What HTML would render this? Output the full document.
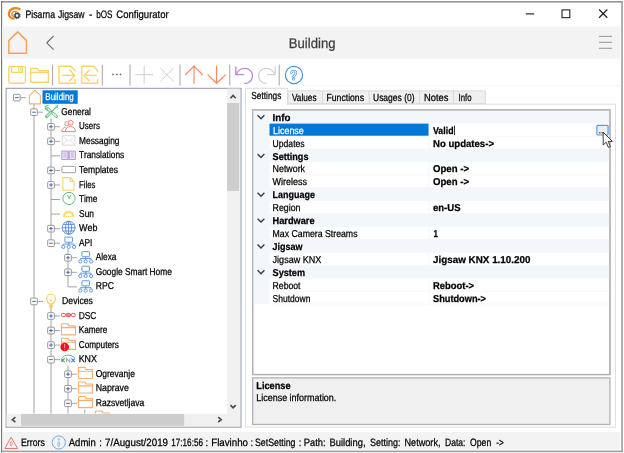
<!DOCTYPE html>
<html><head><meta charset="utf-8"><title>bOS Configurator</title>
<style>
html,body{margin:0;padding:0;background:#fff;}
body{width:624px;height:453px;position:relative;overflow:hidden;font-family:"Liberation Sans",sans-serif;}
#g{position:absolute;left:0;top:0;filter:blur(0.35px);}
.t{position:absolute;left:0;top:0;white-space:nowrap;transform-origin:0 0;}
</style></head><body>
<svg id="g" width="624" height="453" viewBox="0 0 624 453">
<rect x="0.00" y="0.00" width="624.00" height="453.00" rx="0" fill="#fff"/>
<rect x="1.10" y="1.00" width="621.80" height="1.70" rx="0" fill="#9a9a9a"/>
<rect x="621.20" y="1.00" width="1.70" height="451.20" rx="0" fill="#a2a2a2"/>
<rect x="1.10" y="450.60" width="621.80" height="1.60" rx="0" fill="#9e9e9e"/>
<rect x="1.10" y="1.00" width="1.05" height="451.20" rx="0" fill="#6a6a6a"/>
<svg x="0.00" y="0.00" width="30.00" height="26.00" viewBox="0 0 30 26" overflow="visible">
<g transform="translate(14,13.4) scale(0.9) translate(-14,-13.2)">
<path d="M20.4,8.3 C17,7.2 12.4,7.2 10,9.6 C7.6,12 7.6,15.6 10,17.6 C11,18.4 12.2,18.9 13.6,19" fill="none" stroke="#f0861c" stroke-width="2.5" stroke-linecap="round"/>
<path d="M16.8,11.2 C14.6,10.4 12,11.2 11.6,13.4 C11.4,14.8 12.2,16 13.6,16.4" fill="none" stroke="#f0861c" stroke-width="1.5" stroke-linecap="round"/>
</g>
<circle cx="17.1" cy="15.6" r="2.1" fill="#fff" stroke="#444" stroke-width="1.5"/>
<circle cx="17.1" cy="15.6" r="3.1" fill="none" stroke="#444" stroke-width="1" stroke-dasharray="1.2 1.23"/>
</svg>
<svg x="0.00" y="0.00" width="624.00" height="27.00" viewBox="0 0 624 27" overflow="visible">
<path d="M525.8,13.9H534.2" stroke="#222" stroke-width="1.15"/>
<rect x="562" y="9.9" width="7.8" height="7.8" fill="none" stroke="#222" stroke-width="1.1"/>
<path d="M599.1,9.5L607.3,17.8M607.3,9.5L599.1,17.8" stroke="#222" stroke-width="1.25"/>
</svg>
<rect x="2.15" y="26.40" width="618.20" height="32.10" rx="0" fill="#f3f3f3"/>
<svg x="0.00" y="26.00" width="624.00" height="33.00" viewBox="0 26 624 33" overflow="visible">
<path d="M8.8,53.3V40.6L17.7,31.9L26.5,40.6V53.3Z" fill="none" stroke="#f4a45a" stroke-width="1.5" stroke-linejoin="round"/>
<path d="M53.6,35.9L46.8,42.8L53.6,49.6" fill="none" stroke="#6e6e6e" stroke-width="1.2"/>
<path d="M599,36.4H612M599,42.3H612M599,48.3H612" stroke="#8c8c8c" stroke-width="0.9"/>
</svg>
<svg x="0.00" y="58.00" width="624.00" height="30.00" viewBox="0 58 624 30" overflow="visible">
<g fill="none" stroke="#f8d36e" stroke-width="1.35">
<rect x="8.8" y="66.6" width="16.6" height="16.6" rx="1.6"/>
<path d="M11.6,66.6V72.4H22.4V66.6"/>
<rect x="18.6" y="67.8" width="2.2" height="3.2" stroke-width="0.9"/>
<path d="M30.8,82.2V68.5H37.6L38.8,70.7H48.4V82.2Z" stroke-linejoin="round"/>
<path d="M30.8,72.5H48.4"/>
<path d="M75,71.8V70.6L70.8,66.2H59V83.2H75V78.8"/>
<path d="M61.4,75.4H74.4M69.4,69.8L74.6,75.4L69.4,81.2"/>
<path d="M97.6,71.8V70.6L93.4,66.2H81.8V83.2H97.6V78.8"/>
<path d="M96.8,75.4H84.4M89.6,69.8L84.2,75.4L89.6,81.2"/>
</g>
<g stroke="#a6a6a6" stroke-width="1">
<path d="M52.6,64.5V85.6M102.3,64.5V85.6M130,64.5V85.6M180,64.5V85.6M229.8,64.5V85.6M279.2,64.5V85.6"/>
</g>
<g fill="#666"><circle cx="113" cy="74.4" r="0.85"/><circle cx="116.8" cy="74.4" r="0.85"/><circle cx="120.5" cy="74.4" r="0.85"/></g>
<g stroke="#cfcfcf" stroke-width="1" fill="none">
<path d="M135.4,74.7H153M144.2,65.8V83.6"/>
<path d="M160.4,68L173.6,81.4M173.6,68L160.4,81.4"/>
</g>
<g stroke="#f58c60" stroke-width="1.2" fill="none">
<path d="M194,66.2V83.7M185.2,75L194,66.2L202.8,75"/>
<path d="M216.6,65.8V83.3M207.6,74.6L216.6,83.3L225.8,74.6"/>
</g>
<g stroke="#b68bd9" stroke-width="1.3" fill="none">
<path d="M235.8,66.4V74.6H244"/>
<path d="M236.2,74.2C238,70.2 242,67.8 246,68.4 C250.4,69.2 253,72.8 252.4,76.8 C251.8,80.8 248.4,83.6 244.2,83.3"/>
</g>
<g stroke="#d2d2d2" stroke-width="1.3" fill="none">
<path d="M275.2,66.4V74.6H267"/>
<path d="M274.8,74.2C273,70.2 269,67.8 265,68.4 C260.6,69.2 258,72.8 258.6,76.8 C259.2,80.8 262.6,83.6 266.8,83.3"/>
</g>
<circle cx="294" cy="75" r="8.6" fill="none" stroke="#4a90d9" stroke-width="1.2"/>
</svg>
<rect x="6.10" y="88.30" width="234.90" height="338.90" rx="0" fill="#fff" stroke="#9298a4" stroke-width="1.0"/>
<rect x="227.10" y="88.60" width="12.80" height="325.30" rx="0" fill="#f0f0f0"/>
<rect x="227.10" y="103.00" width="12.00" height="87.90" rx="0" fill="#cdcdcd"/>
<rect x="227.10" y="413.90" width="12.80" height="11.90" rx="0" fill="#f0f0f0"/>
<rect x="6.60" y="413.90" width="220.50" height="11.90" rx="0" fill="#f0f0f0"/>
<rect x="21.05" y="413.90" width="163.10" height="11.90" rx="0" fill="#cdcdcd"/>
<svg x="0.00" y="88.00" width="624.00" height="340.00" viewBox="0 88 624 340" overflow="visible">
<g fill="none" stroke="#484848" stroke-width="1.6">
<path d="M230.5,98.2L233.1,95.4L235.7,98.2"/>
<path d="M230.5,405.1L233.1,407.9L235.7,405.1"/>
<path d="M15.4,417.2L12.4,419.7L15.4,422.2"/>
<path d="M218.2,417.2L221.2,419.7L218.2,422.2"/>
</g>
</svg>
<svg x="6.50" y="88.50" width="221.00" height="325.10" viewBox="6.5 88.5 221 325.1" overflow="hidden"><path d="M34,103.65V420.41" stroke="#9a9a9a" stroke-width="0.9"/><path d="M51,118.21V243.20" stroke="#9a9a9a" stroke-width="0.9"/><path d="M68,249.20V286.87" stroke="#9a9a9a" stroke-width="0.9"/><path d="M51,307.42V420.41" stroke="#9a9a9a" stroke-width="0.9"/><path d="M68,365.64V420.41" stroke="#9a9a9a" stroke-width="0.9"/><path d="M84.8,409.50V419.86" stroke="#9a9a9a" stroke-width="0.9"/><path d="M16.8,97.65H25.8" stroke="#9a9a9a" stroke-width="0.9"/><rect x="13.50" y="94.35" width="6.6" height="6.6" rx="0.8" fill="#fff" stroke="#8c8c8c" stroke-width="0.9"/><path d="M15.00,97.65H18.60" stroke="#3a50a8" stroke-width="0.9"/><path d="M34,112.21H43" stroke="#9a9a9a" stroke-width="0.9"/><rect x="30.70" y="108.91" width="6.6" height="6.6" rx="0.8" fill="#fff" stroke="#8c8c8c" stroke-width="0.9"/><path d="M32.20,112.21H35.80" stroke="#3a50a8" stroke-width="0.9"/><path d="M51,126.76H60" stroke="#9a9a9a" stroke-width="0.9"/><rect x="47.70" y="123.46" width="6.6" height="6.6" rx="0.8" fill="#fff" stroke="#8c8c8c" stroke-width="0.9"/><path d="M49.20,126.76H52.80" stroke="#3a50a8" stroke-width="0.9"/><path d="M51.00,124.96V128.56" stroke="#3a50a8" stroke-width="0.9"/><path d="M51,141.31H60" stroke="#9a9a9a" stroke-width="0.9"/><rect x="47.70" y="138.01" width="6.6" height="6.6" rx="0.8" fill="#fff" stroke="#8c8c8c" stroke-width="0.9"/><path d="M49.20,141.31H52.80" stroke="#3a50a8" stroke-width="0.9"/><path d="M51.00,139.51V143.12" stroke="#3a50a8" stroke-width="0.9"/><path d="M51,155.87H60" stroke="#9a9a9a" stroke-width="0.9"/><path d="M51,170.43H60" stroke="#9a9a9a" stroke-width="0.9"/><rect x="47.70" y="167.12" width="6.6" height="6.6" rx="0.8" fill="#fff" stroke="#8c8c8c" stroke-width="0.9"/><path d="M49.20,170.43H52.80" stroke="#3a50a8" stroke-width="0.9"/><path d="M51.00,168.62V172.23" stroke="#3a50a8" stroke-width="0.9"/><path d="M51,184.98H60" stroke="#9a9a9a" stroke-width="0.9"/><rect x="47.70" y="181.68" width="6.6" height="6.6" rx="0.8" fill="#fff" stroke="#8c8c8c" stroke-width="0.9"/><path d="M49.20,184.98H52.80" stroke="#3a50a8" stroke-width="0.9"/><path d="M51.00,183.18V186.78" stroke="#3a50a8" stroke-width="0.9"/><path d="M51,199.53H60" stroke="#9a9a9a" stroke-width="0.9"/><path d="M51,214.09H60" stroke="#9a9a9a" stroke-width="0.9"/><path d="M51,228.65H60" stroke="#9a9a9a" stroke-width="0.9"/><rect x="47.70" y="225.34" width="6.6" height="6.6" rx="0.8" fill="#fff" stroke="#8c8c8c" stroke-width="0.9"/><path d="M49.20,228.65H52.80" stroke="#3a50a8" stroke-width="0.9"/><path d="M51.00,226.84V230.45" stroke="#3a50a8" stroke-width="0.9"/><path d="M51,243.20H60" stroke="#9a9a9a" stroke-width="0.9"/><rect x="47.70" y="239.90" width="6.6" height="6.6" rx="0.8" fill="#fff" stroke="#8c8c8c" stroke-width="0.9"/><path d="M49.20,243.20H52.80" stroke="#3a50a8" stroke-width="0.9"/><path d="M68,257.75H77" stroke="#9a9a9a" stroke-width="0.9"/><rect x="64.70" y="254.45" width="6.6" height="6.6" rx="0.8" fill="#fff" stroke="#8c8c8c" stroke-width="0.9"/><path d="M66.20,257.75H69.80" stroke="#3a50a8" stroke-width="0.9"/><path d="M68.00,255.95V259.56" stroke="#3a50a8" stroke-width="0.9"/><path d="M68,272.31H77" stroke="#9a9a9a" stroke-width="0.9"/><rect x="64.70" y="269.01" width="6.6" height="6.6" rx="0.8" fill="#fff" stroke="#8c8c8c" stroke-width="0.9"/><path d="M66.20,272.31H69.80" stroke="#3a50a8" stroke-width="0.9"/><path d="M68.00,270.51V274.11" stroke="#3a50a8" stroke-width="0.9"/><path d="M68,286.87H77" stroke="#9a9a9a" stroke-width="0.9"/><path d="M34,301.42H43" stroke="#9a9a9a" stroke-width="0.9"/><rect x="30.70" y="298.12" width="6.6" height="6.6" rx="0.8" fill="#fff" stroke="#8c8c8c" stroke-width="0.9"/><path d="M32.20,301.42H35.80" stroke="#3a50a8" stroke-width="0.9"/><path d="M51,315.98H60" stroke="#9a9a9a" stroke-width="0.9"/><rect x="47.70" y="312.68" width="6.6" height="6.6" rx="0.8" fill="#fff" stroke="#8c8c8c" stroke-width="0.9"/><path d="M49.20,315.98H52.80" stroke="#3a50a8" stroke-width="0.9"/><path d="M51.00,314.18V317.78" stroke="#3a50a8" stroke-width="0.9"/><path d="M51,330.53H60" stroke="#9a9a9a" stroke-width="0.9"/><rect x="47.70" y="327.23" width="6.6" height="6.6" rx="0.8" fill="#fff" stroke="#8c8c8c" stroke-width="0.9"/><path d="M49.20,330.53H52.80" stroke="#3a50a8" stroke-width="0.9"/><path d="M51.00,328.73V332.33" stroke="#3a50a8" stroke-width="0.9"/><path d="M51,345.09H60" stroke="#9a9a9a" stroke-width="0.9"/><rect x="47.70" y="341.79" width="6.6" height="6.6" rx="0.8" fill="#fff" stroke="#8c8c8c" stroke-width="0.9"/><path d="M49.20,345.09H52.80" stroke="#3a50a8" stroke-width="0.9"/><path d="M51.00,343.29V346.89" stroke="#3a50a8" stroke-width="0.9"/><path d="M51,359.64H60" stroke="#9a9a9a" stroke-width="0.9"/><rect x="47.70" y="356.34" width="6.6" height="6.6" rx="0.8" fill="#fff" stroke="#8c8c8c" stroke-width="0.9"/><path d="M49.20,359.64H52.80" stroke="#3a50a8" stroke-width="0.9"/><path d="M68,374.20H77" stroke="#9a9a9a" stroke-width="0.9"/><rect x="64.70" y="370.90" width="6.6" height="6.6" rx="0.8" fill="#fff" stroke="#8c8c8c" stroke-width="0.9"/><path d="M66.20,374.20H69.80" stroke="#3a50a8" stroke-width="0.9"/><path d="M68.00,372.40V376.00" stroke="#3a50a8" stroke-width="0.9"/><path d="M68,388.75H77" stroke="#9a9a9a" stroke-width="0.9"/><rect x="64.70" y="385.45" width="6.6" height="6.6" rx="0.8" fill="#fff" stroke="#8c8c8c" stroke-width="0.9"/><path d="M66.20,388.75H69.80" stroke="#3a50a8" stroke-width="0.9"/><path d="M68.00,386.95V390.55" stroke="#3a50a8" stroke-width="0.9"/><path d="M68,403.30H77" stroke="#9a9a9a" stroke-width="0.9"/><rect x="64.70" y="400.00" width="6.6" height="6.6" rx="0.8" fill="#fff" stroke="#8c8c8c" stroke-width="0.9"/><path d="M66.20,403.30H69.80" stroke="#3a50a8" stroke-width="0.9"/><g transform="translate(25.80,97.65)" fill="none" stroke-width="1"><path d="M3.6,6.2V-2.2L9.1,-7.4L14.6,-2.2V6.2Z" stroke="#f6b26b" stroke-width="1.1"/></g><g transform="translate(43.00,112.21)" fill="none" stroke-width="1"><path d="M4.6,-3.6L13.4,4.2" stroke="#63c389" stroke-width="3" stroke-linecap="round"/><path d="M4.8,-3.4L13.2,4" stroke="#fff" stroke-width="1.2" stroke-linecap="round"/><path d="M5.4,-6.6C3.6,-7.2 1.8,-5.8 2.2,-3.8C2.6,-2.4 4,-1.8 5.2,-2.2" stroke="#63c389" stroke-width="1.1"/><path d="M14.6,-6.4L9,-0.8" stroke="#63c389" stroke-width="1.3" stroke-linecap="round"/><path d="M12.6,-6.8L15.2,-4.4" stroke="#63c389" stroke-width="1"/><path d="M8.2,0L3.6,4.4" stroke="#63c389" stroke-width="3.2" stroke-linecap="round"/><path d="M7.8,0.4L4,4" stroke="#d8f0e0" stroke-width="1.2" stroke-linecap="round"/></g><g transform="translate(60.00,126.76)" fill="none" stroke-width="1"><g stroke="#ee8a7c" stroke-width="1"><circle cx="6.9" cy="-3" r="2.1"/><path d="M1.6,4.6C1.6,2.4 3.4,0.8 5.6,0.4"/><circle cx="10.7" cy="-4" r="2.4" fill="#fff"/><path d="M5.4,4.8C5.4,1.4 7.6,-0.2 10.6,-0.2C13.6,-0.2 15.4,1.4 15.4,4.8Z" fill="#fff"/><path d="M1.6,4.8H5.4"/></g></g><g transform="translate(60.00,141.31)" fill="none" stroke-width="1"><g stroke="#dadada"><rect x="2.3" y="-5.6" width="12.7" height="9.4"/><path d="M2.3,-5.6L8.6,0.4L15,-5.6M2.3,3.8L6.8,-1.2M15,3.8L10.4,-1.2" stroke-width="0.8"/></g></g><g transform="translate(60.00,155.87)" fill="none" stroke-width="1"><g stroke="#b39ad8"><path d="M1.8,-4.8V3.6H8V-4.8ZM9.2,-4.8V3.6H15.4V-4.8Z" fill="#efe8f8"/><path d="M3.2,-2.8H6.6M3.2,-0.8H6.6M3.2,1.2H6.6M10.6,-2.8H14M10.6,-0.8H14M10.6,1.2H14" stroke-width="0.8"/><path d="M8.6,-5V4" stroke-width="0.8"/></g></g><g transform="translate(60.00,170.43)" fill="none" stroke-width="1"><rect x="1.9" y="-4.1" width="13.6" height="6.4" rx="0.8" stroke="#a2a2a2"/></g><g transform="translate(60.00,184.98)" fill="none" stroke-width="1"><path d="M2.8,-7.4H10.2L14,-3.6V5.2H2.8Z M10.2,-7.4V-3.6H14" stroke="#f9d070" stroke-width="1.1"/></g><g transform="translate(60.00,199.53)" fill="none" stroke-width="1"><circle cx="9" cy="-1.1" r="6.1" stroke="#62bb7a"/><path d="M7.4,-4.4L9,-0.8L10.6,-4.4" stroke="#62bb7a" stroke-width="0.9"/></g><g transform="translate(60.00,214.09)" fill="none" stroke-width="1"><path d="M4.2,2.2A4.4,4.4 0 0 1 13,2.2" stroke="#fbd974" stroke-width="2.3"/><path d="M2.8,2.3H14.4" stroke="#fbd974" stroke-width="1"/></g><g transform="translate(60.00,228.65)" fill="none" stroke-width="1"><g stroke="#4a8cdb" stroke-width="0.9"><circle cx="8.6" cy="-0.9" r="6.5"/><ellipse cx="8.6" cy="-0.9" rx="3" ry="6.5"/><path d="M8.6,-7.4V5.6M2.1,-0.9H15.1M3,-4.2H14.2M3,2.4H14.2"/></g></g><g transform="translate(60.00,243.20)" fill="none" stroke-width="1"><g stroke="#6398df" stroke-width="1"><rect x="4.9" y="-6.1" width="7.6" height="5.1" rx="0.6"/><path d="M3.3,0.8H14.1M8.7,-1V2"/><circle cx="3.3" cy="3.7" r="1.6"/><circle cx="8.7" cy="3.7" r="1.6"/><circle cx="14.1" cy="3.7" r="1.6"/><path d="M3.3,0.8V2.1M14.1,0.8V2.1" stroke-width="0.8"/></g></g><g transform="translate(77.00,257.75)" fill="none" stroke-width="1"><g stroke="#6398df" stroke-width="1"><rect x="4.9" y="-6.1" width="7.6" height="5.1" rx="0.6"/><path d="M3.3,0.8H14.1M8.7,-1V2"/><circle cx="3.3" cy="3.7" r="1.6"/><circle cx="8.7" cy="3.7" r="1.6"/><circle cx="14.1" cy="3.7" r="1.6"/><path d="M3.3,0.8V2.1M14.1,0.8V2.1" stroke-width="0.8"/></g></g><g transform="translate(77.00,272.31)" fill="none" stroke-width="1"><g stroke="#6398df" stroke-width="1"><rect x="4.9" y="-6.1" width="7.6" height="5.1" rx="0.6"/><path d="M3.3,0.8H14.1M8.7,-1V2"/><circle cx="3.3" cy="3.7" r="1.6"/><circle cx="8.7" cy="3.7" r="1.6"/><circle cx="14.1" cy="3.7" r="1.6"/><path d="M3.3,0.8V2.1M14.1,0.8V2.1" stroke-width="0.8"/></g></g><g transform="translate(77.00,286.87)" fill="none" stroke-width="1"><g stroke="#6398df" stroke-width="1"><rect x="4.9" y="-6.1" width="7.6" height="5.1" rx="0.6"/><path d="M3.3,0.8H14.1M8.7,-1V2"/><circle cx="3.3" cy="3.7" r="1.6"/><circle cx="8.7" cy="3.7" r="1.6"/><circle cx="14.1" cy="3.7" r="1.6"/><path d="M3.3,0.8V2.1M14.1,0.8V2.1" stroke-width="0.8"/></g></g><g transform="translate(43.00,301.42)" fill="none" stroke-width="1"><g stroke="#f9cf4f" stroke-width="1.1"><path d="M6.2,2.4C4.2,0.6 3.6,-1 3.6,-2.6C3.6,-5.2 5.6,-7.2 8,-7.2C10.4,-7.2 12.4,-5.2 12.4,-2.6C12.4,-1 11.8,0.6 9.8,2.4Z"/><path d="M7,-2.4L8,0L9,-2.4" stroke-width="0.8"/></g><rect x="6.3" y="2.8" width="3.4" height="3.8" rx="0.8" fill="#f9cf4f" stroke="none"/></g><g transform="translate(60.00,315.98)" fill="none" stroke-width="1"><g stroke="#e8525c" stroke-width="1"><rect x="1.5" y="-2.6" width="3.9" height="3.3" rx="1.2"/><rect x="6.2" y="-2.6" width="4.4" height="3.3" rx="1.4" fill="#f08a90"/><rect x="11.4" y="-2.6" width="3.9" height="3.3" rx="1.4"/></g></g><g transform="translate(60.00,330.53)" fill="none" stroke-width="1"><g stroke="#f7ae72" stroke-width="1.1"><path d="M1.5,4.3V-6Q1.5,-6.8 2.3,-6.8H7.4Q8.2,-6.8 8.5,-6L8.9,-4.7H15.5V4.3Z" stroke-linejoin="round"/><path d="M1.5,-2.9H15.5"/></g></g><g transform="translate(60.00,345.09)" fill="none" stroke-width="1"><g stroke="#f7ae72" stroke-width="1.1"><path d="M1.5,4.3V-6Q1.5,-6.8 2.3,-6.8H7.4Q8.2,-6.8 8.5,-6L8.9,-4.7H15.5V4.3Z" stroke-linejoin="round"/><path d="M1.5,-2.9H15.5"/></g><circle cx="4.7" cy="1.9" r="4.3" fill="#f5101c" stroke="none"/><path d="M4.7,-1.2V3.2M4.7,4.2V5" stroke="#ff9a9a" stroke-width="1"/></g><g transform="translate(60.00,359.64)" fill="none" stroke-width="1"><path d="M1.6,-1.4C3.2,-3.4 5.6,-4.5 8.2,-4.5" stroke="#5cb274" stroke-width="0.9"/><path d="M8.2,-4.5C10.8,-4.5 13.4,-3.4 15,-1.4" stroke="#4a92d2" stroke-width="0.9"/><g stroke-width="1.1"><path d="M1.8,-1.2V2.4M4.8,-1.2L2.2,0.6L4.8,2.4" stroke="#48a868"/><path d="M6.5,2.4V-1.2L9.7,2.4V-1.2" stroke="#a4acb4"/><path d="M11.4,-1.2L15,2.4M15,-1.2L11.4,2.4" stroke="#3f82cc"/></g></g><g transform="translate(77.00,374.20)" fill="none" stroke-width="1"><g stroke="#f7ae72" stroke-width="1.1"><path d="M1.5,4.3V-6Q1.5,-6.8 2.3,-6.8H7.4Q8.2,-6.8 8.5,-6L8.9,-4.7H15.5V4.3Z" stroke-linejoin="round"/><path d="M1.5,-2.9H15.5"/></g></g><g transform="translate(77.00,388.75)" fill="none" stroke-width="1"><g stroke="#f7ae72" stroke-width="1.1"><path d="M1.5,4.3V-6Q1.5,-6.8 2.3,-6.8H7.4Q8.2,-6.8 8.5,-6L8.9,-4.7H15.5V4.3Z" stroke-linejoin="round"/><path d="M1.5,-2.9H15.5"/></g></g><g transform="translate(77.00,403.30)" fill="none" stroke-width="1"><g stroke="#f7ae72" stroke-width="1.1"><path d="M1.5,4.3V-6Q1.5,-6.8 2.3,-6.8H7.4Q8.2,-6.8 8.5,-6L8.9,-4.7H15.5V4.3Z" stroke-linejoin="round"/><path d="M1.5,-2.9H15.5"/></g></g><g transform="translate(94.00,417.86)" fill="none" stroke-width="1"><g stroke="#f7ae72" stroke-width="1.1"><path d="M1.5,4.3V-6Q1.5,-6.8 2.3,-6.8H7.4Q8.2,-6.8 8.5,-6L8.9,-4.7H15.5V4.3Z" stroke-linejoin="round"/><path d="M1.5,-2.9H15.5"/></g></g></svg>
<rect x="42.50" y="90.30" width="35.20" height="13.50" rx="0" fill="#0078d7"/>
<rect x="303.00" y="85.20" width="318.00" height="1.00" rx="0" fill="#f3f6fb"/>
<rect x="245.30" y="104.20" width="370.20" height="323.00" rx="0" fill="#fff" stroke="#e0e0e0" stroke-width="1.0"/>
<rect x="288.10" y="90.90" width="34.40" height="12.80" rx="0" fill="#f0f0f0" stroke="#d9d9d9" stroke-width="1.0"/>
<rect x="322.50" y="90.90" width="46.80" height="12.80" rx="0" fill="#f0f0f0" stroke="#d9d9d9" stroke-width="1.0"/>
<rect x="369.30" y="90.90" width="50.20" height="12.80" rx="0" fill="#f0f0f0" stroke="#d9d9d9" stroke-width="1.0"/>
<rect x="419.50" y="90.90" width="34.00" height="12.80" rx="0" fill="#f0f0f0" stroke="#d9d9d9" stroke-width="1.0"/>
<rect x="453.50" y="90.90" width="31.80" height="12.80" rx="0" fill="#f0f0f0" stroke="#d9d9d9" stroke-width="1.0"/>
<rect x="244.80" y="87.75" width="43.30" height="17.20" fill="#fff"/>
<path d="M245.30,104.95V88.25H287.60V104.95" fill="none" stroke="#d9d9d9" stroke-width="1.0"/>
<rect x="252.65" y="109.95" width="357.30" height="264.60" rx="0" fill="#fff" stroke="#b2b2b2" stroke-width="1.3"/>
<rect x="253.00" y="110.30" width="16.50" height="193.92" rx="0" fill="#f3f6fb"/>
<rect x="269.50" y="110.49" width="340.10" height="12.91" rx="0" fill="#f3f6fb"/>
<rect x="269.50" y="135.72" width="340.10" height="0.80" rx="0" fill="#f3f6fb"/>
<rect x="269.50" y="123.61" width="159.50" height="12.11" rx="0" fill="#0078d7"/>
<rect x="269.50" y="148.64" width="340.10" height="0.80" rx="0" fill="#f3f6fb"/>
<rect x="269.50" y="149.24" width="340.10" height="12.91" rx="0" fill="#f3f6fb"/>
<rect x="269.50" y="174.47" width="340.10" height="0.80" rx="0" fill="#f3f6fb"/>
<rect x="269.50" y="187.38" width="340.10" height="0.80" rx="0" fill="#f3f6fb"/>
<rect x="269.50" y="187.98" width="340.10" height="12.91" rx="0" fill="#f3f6fb"/>
<rect x="269.50" y="213.21" width="340.10" height="0.80" rx="0" fill="#f3f6fb"/>
<rect x="269.50" y="213.81" width="340.10" height="12.91" rx="0" fill="#f3f6fb"/>
<rect x="269.50" y="239.04" width="340.10" height="0.80" rx="0" fill="#f3f6fb"/>
<rect x="269.50" y="239.64" width="340.10" height="12.91" rx="0" fill="#f3f6fb"/>
<rect x="269.50" y="264.87" width="340.10" height="0.80" rx="0" fill="#f3f6fb"/>
<rect x="269.50" y="265.47" width="340.10" height="12.91" rx="0" fill="#f3f6fb"/>
<rect x="269.50" y="290.70" width="340.10" height="0.80" rx="0" fill="#f3f6fb"/>
<rect x="269.50" y="303.62" width="340.10" height="0.80" rx="0" fill="#f3f6fb"/>
<rect x="428.50" y="123.41" width="0.90" height="25.83" rx="0" fill="#f3f6fb"/>
<rect x="428.50" y="162.15" width="0.90" height="25.83" rx="0" fill="#f3f6fb"/>
<rect x="428.50" y="200.90" width="0.90" height="12.91" rx="0" fill="#f3f6fb"/>
<rect x="428.50" y="226.73" width="0.90" height="12.91" rx="0" fill="#f3f6fb"/>
<rect x="428.50" y="252.56" width="0.90" height="12.91" rx="0" fill="#f3f6fb"/>
<rect x="428.50" y="278.39" width="0.90" height="25.83" rx="0" fill="#f3f6fb"/>
<svg x="0.00" y="105.00" width="624.00" height="270.00" viewBox="0 105 624 270" overflow="visible"><path d="M257.6,115.35L261,118.75L264.4,115.35" fill="none" stroke="#3a3a3a" stroke-width="1.4"/><path d="M257.6,154.09L261,157.50L264.4,154.09" fill="none" stroke="#3a3a3a" stroke-width="1.4"/><path d="M257.6,192.84L261,196.24L264.4,192.84" fill="none" stroke="#3a3a3a" stroke-width="1.4"/><path d="M257.6,218.67L261,222.07L264.4,218.67" fill="none" stroke="#3a3a3a" stroke-width="1.4"/><path d="M257.6,244.50L261,247.90L264.4,244.50" fill="none" stroke="#3a3a3a" stroke-width="1.4"/><path d="M257.6,270.33L261,273.73L264.4,270.33" fill="none" stroke="#3a3a3a" stroke-width="1.4"/></svg>
<rect x="252.65" y="109.95" width="357.30" height="264.60" rx="0" fill="none" stroke="#b2b2b2" stroke-width="1.3"/>
<rect x="454.00" y="125.57" width="0.80" height="9.40" rx="0" fill="#000"/>
<rect x="596.90" y="125.30" width="11.20" height="9.70" rx="1" fill="#eeeeee" stroke="#4a9fea" stroke-width="1.2"/>
<rect x="599.00" y="132.20" width="0.90" height="1.20" rx="0" fill="#333"/>
<rect x="600.60" y="132.20" width="0.90" height="1.20" rx="0" fill="#333"/>
<rect x="602.20" y="132.20" width="0.90" height="1.20" rx="0" fill="#333"/>
<svg x="602.60" y="131.60" width="11.00" height="17.00" viewBox="0 0 11 17" overflow="visible"><path d="M0.6,0.6V13.4L3.6,10.6L5.8,15.8L7.8,15L5.6,9.8H9.8Z" fill="#fff" stroke="#2a2a2a" stroke-width="0.9" stroke-linejoin="round"/></svg>
<rect x="252.65" y="377.85" width="357.30" height="46.60" rx="0" fill="#f0f0f0" stroke="#b2b2b2" stroke-width="1.3"/>
<rect x="3.00" y="432.00" width="616.90" height="17.70" rx="0" fill="#f3f3f3"/>
<svg x="0.00" y="430.00" width="70.00" height="22.00" viewBox="0 430 70 22" overflow="visible">
<path d="M11.1,437.2L4.8,448.5H17.6Z" fill="none" stroke="#e8786c" stroke-width="1" stroke-linejoin="round"/>
<ellipse cx="11.2" cy="443.8" rx="0.9" ry="2.3" fill="none" stroke="#e8786c" stroke-width="0.7"/>
<circle cx="58.8" cy="442.5" r="6.6" fill="none" stroke="#6ea8e2" stroke-width="1"/>
<circle cx="58.8" cy="439.4" r="0.8" fill="none" stroke="#6ea8e2" stroke-width="0.7"/>
<ellipse cx="58.8" cy="444.2" rx="0.9" ry="2.6" fill="none" stroke="#6ea8e2" stroke-width="0.7"/>
</svg>
<g font-family="Liberation Sans, sans-serif" text-rendering="geometricPrecision" xml:space="preserve">
<text x="25.50" y="17.94" font-size="10.8" fill="#000" textLength="29.50" lengthAdjust="spacingAndGlyphs"  stroke="#000" stroke-width="0.25">Pisarna</text>
<text x="58.00" y="17.94" font-size="10.8" fill="#000" textLength="26.50" lengthAdjust="spacingAndGlyphs"  stroke="#000" stroke-width="0.25">Jigsaw</text>
<text x="89.00" y="17.94" font-size="10.8" fill="#000" textLength="3.40" lengthAdjust="spacingAndGlyphs"  stroke="#000" stroke-width="0.25">-</text>
<text x="96.25" y="17.94" font-size="10.8" fill="#000" textLength="16.25" lengthAdjust="spacingAndGlyphs"  stroke="#000" stroke-width="0.25">bOS</text>
<text x="116.25" y="17.94" font-size="10.8" fill="#000" textLength="52.50" lengthAdjust="spacingAndGlyphs"  stroke="#000" stroke-width="0.25">Configurator</text>
<text x="288.80" y="48.05" font-size="14" fill="#3c3c3c" textLength="46.70" lengthAdjust="spacingAndGlyphs"  stroke="#3c3c3c" stroke-width="0.25">Building</text>
<text x="289.80" y="80.25" font-size="14" font-weight="bold" fill="#fff" textLength="7.80" lengthAdjust="spacingAndGlyphs" stroke="#4a90d9" stroke-width="0.7">?</text>
<text x="45.30" y="100.22" font-size="10" fill="#fff" textLength="28.50" lengthAdjust="spacingAndGlyphs"  stroke="#fff" stroke-width="0.25">Building</text>
<text x="61.30" y="114.77" font-size="10" fill="#000" textLength="29.60" lengthAdjust="spacingAndGlyphs"  stroke="#000" stroke-width="0.25">General</text>
<text x="79.10" y="129.32" font-size="10" fill="#000" textLength="20.80" lengthAdjust="spacingAndGlyphs"  stroke="#000" stroke-width="0.25">Users</text>
<text x="79.10" y="143.88" font-size="10" fill="#000" textLength="40.30" lengthAdjust="spacingAndGlyphs"  stroke="#000" stroke-width="0.25">Messaging</text>
<text x="79.10" y="158.44" font-size="10" fill="#000" textLength="45.10" lengthAdjust="spacingAndGlyphs"  stroke="#000" stroke-width="0.25">Translations</text>
<text x="79.10" y="172.99" font-size="10" fill="#000" textLength="38.80" lengthAdjust="spacingAndGlyphs"  stroke="#000" stroke-width="0.25">Templates</text>
<text x="79.10" y="187.55" font-size="10" fill="#000" textLength="16.30" lengthAdjust="spacingAndGlyphs"  stroke="#000" stroke-width="0.25">Files</text>
<text x="79.10" y="202.10" font-size="10" fill="#000" textLength="18.30" lengthAdjust="spacingAndGlyphs"  stroke="#000" stroke-width="0.25">Time</text>
<text x="79.10" y="216.66" font-size="10" fill="#000" textLength="14.80" lengthAdjust="spacingAndGlyphs"  stroke="#000" stroke-width="0.25">Sun</text>
<text x="79.10" y="231.21" font-size="10" fill="#000" textLength="18.30" lengthAdjust="spacingAndGlyphs"  stroke="#000" stroke-width="0.25">Web</text>
<text x="79.10" y="245.77" font-size="10" fill="#000" textLength="13.30" lengthAdjust="spacingAndGlyphs"  stroke="#000" stroke-width="0.25">API</text>
<text x="95.70" y="260.32" font-size="10" fill="#000" textLength="20.70" lengthAdjust="spacingAndGlyphs"  stroke="#000" stroke-width="0.25">Alexa</text>
<text x="95.70" y="274.88" font-size="10" fill="#000" textLength="76.20" lengthAdjust="spacingAndGlyphs"  stroke="#000" stroke-width="0.25">Google Smart Home</text>
<text x="95.70" y="289.43" font-size="10" fill="#000" textLength="18.20" lengthAdjust="spacingAndGlyphs"  stroke="#000" stroke-width="0.25">RPC</text>
<text x="62.10" y="303.98" font-size="10" fill="#000" textLength="30.80" lengthAdjust="spacingAndGlyphs"  stroke="#000" stroke-width="0.25">Devices</text>
<text x="78.70" y="318.54" font-size="10" fill="#000" textLength="17.70" lengthAdjust="spacingAndGlyphs"  stroke="#000" stroke-width="0.25">DSC</text>
<text x="78.70" y="333.09" font-size="10" fill="#000" textLength="28.70" lengthAdjust="spacingAndGlyphs"  stroke="#000" stroke-width="0.25">Kamere</text>
<text x="78.70" y="347.65" font-size="10" fill="#000" textLength="40.20" lengthAdjust="spacingAndGlyphs"  stroke="#000" stroke-width="0.25">Computers</text>
<text x="78.70" y="362.20" font-size="10" fill="#000" textLength="18.20" lengthAdjust="spacingAndGlyphs"  stroke="#000" stroke-width="0.25">KNX</text>
<text x="95.70" y="376.76" font-size="10" fill="#000" textLength="39.20" lengthAdjust="spacingAndGlyphs"  stroke="#000" stroke-width="0.25">Ogrevanje</text>
<text x="95.70" y="391.31" font-size="10" fill="#000" textLength="33.20" lengthAdjust="spacingAndGlyphs"  stroke="#000" stroke-width="0.25">Naprave</text>
<text x="95.70" y="405.87" font-size="10" fill="#000" textLength="48.70" lengthAdjust="spacingAndGlyphs"  stroke="#000" stroke-width="0.25">Razsvetljava</text>
<text x="292.00" y="100.93" font-size="10.2" fill="#000" textLength="24.50" lengthAdjust="spacingAndGlyphs"  stroke="#000" stroke-width="0.25">Values</text>
<text x="326.50" y="100.93" font-size="10.2" fill="#000" textLength="37.50" lengthAdjust="spacingAndGlyphs"  stroke="#000" stroke-width="0.25">Functions</text>
<text x="373.00" y="100.93" font-size="10.2" fill="#000" textLength="41.50" lengthAdjust="spacingAndGlyphs"  stroke="#000" stroke-width="0.25">Usages (0)</text>
<text x="424.00" y="100.93" font-size="10.2" fill="#000" textLength="24.50" lengthAdjust="spacingAndGlyphs"  stroke="#000" stroke-width="0.25">Notes</text>
<text x="458.50" y="100.93" font-size="10.2" fill="#000" textLength="13.00" lengthAdjust="spacingAndGlyphs"  stroke="#000" stroke-width="0.25">Info</text>
<text x="251.30" y="99.43" font-size="10.2" fill="#000" textLength="30.00" lengthAdjust="spacingAndGlyphs"  stroke="#000" stroke-width="0.25">Settings</text>
<text x="272.60" y="120.82" font-size="10" font-weight="bold" fill="#000" textLength="17.90" lengthAdjust="spacingAndGlyphs"  stroke="#000" stroke-width="0.25">Info</text>
<text x="273.00" y="133.73" font-size="10" fill="#fff" textLength="30.80" lengthAdjust="spacingAndGlyphs"  stroke="#fff" stroke-width="0.25">License</text>
<text x="433.00" y="133.73" font-size="10" font-weight="bold" fill="#000" textLength="20.50" lengthAdjust="spacingAndGlyphs"  stroke="#000" stroke-width="0.25">Valid</text>
<text x="272.60" y="146.65" font-size="10" fill="#000" textLength="32.00" lengthAdjust="spacingAndGlyphs"  stroke="#000" stroke-width="0.25">Updates</text>
<text x="433.00" y="146.65" font-size="10" font-weight="bold" fill="#000" textLength="61.00" lengthAdjust="spacingAndGlyphs"  stroke="#000" stroke-width="0.25">No updates-&gt;</text>
<text x="272.60" y="159.56" font-size="10" font-weight="bold" fill="#000" textLength="35.90" lengthAdjust="spacingAndGlyphs"  stroke="#000" stroke-width="0.25">Settings</text>
<text x="272.60" y="172.48" font-size="10" fill="#000" textLength="32.40" lengthAdjust="spacingAndGlyphs"  stroke="#000" stroke-width="0.25">Network</text>
<text x="433.00" y="172.48" font-size="10" font-weight="bold" fill="#000" textLength="36.00" lengthAdjust="spacingAndGlyphs"  stroke="#000" stroke-width="0.25">Open -&gt;</text>
<text x="272.60" y="185.39" font-size="10" fill="#000" textLength="34.40" lengthAdjust="spacingAndGlyphs"  stroke="#000" stroke-width="0.25">Wireless</text>
<text x="433.00" y="185.39" font-size="10" font-weight="bold" fill="#000" textLength="36.00" lengthAdjust="spacingAndGlyphs"  stroke="#000" stroke-width="0.25">Open -&gt;</text>
<text x="272.60" y="198.31" font-size="10" font-weight="bold" fill="#000" textLength="42.40" lengthAdjust="spacingAndGlyphs"  stroke="#000" stroke-width="0.25">Language</text>
<text x="272.60" y="211.22" font-size="10" fill="#000" textLength="27.90" lengthAdjust="spacingAndGlyphs"  stroke="#000" stroke-width="0.25">Region</text>
<text x="433.00" y="211.22" font-size="10" font-weight="bold" fill="#000" textLength="27.50" lengthAdjust="spacingAndGlyphs"  stroke="#000" stroke-width="0.25">en-US</text>
<text x="272.60" y="224.13" font-size="10" font-weight="bold" fill="#000" textLength="41.90" lengthAdjust="spacingAndGlyphs"  stroke="#000" stroke-width="0.25">Hardware</text>
<text x="272.60" y="237.05" font-size="10" fill="#000" textLength="84.90" lengthAdjust="spacingAndGlyphs"  stroke="#000" stroke-width="0.25">Max Camera Streams</text>
<text x="433.60" y="237.05" font-size="10" font-weight="bold" fill="#000" textLength="4.40" lengthAdjust="spacingAndGlyphs"  stroke="#000" stroke-width="0.25">1</text>
<text x="272.60" y="249.96" font-size="10" font-weight="bold" fill="#000" textLength="29.90" lengthAdjust="spacingAndGlyphs"  stroke="#000" stroke-width="0.25">Jigsaw</text>
<text x="272.60" y="262.88" font-size="10" fill="#000" textLength="48.70" lengthAdjust="spacingAndGlyphs"  stroke="#000" stroke-width="0.25">Jigsaw KNX</text>
<text x="433.00" y="262.88" font-size="10" font-weight="bold" fill="#000" textLength="97.50" lengthAdjust="spacingAndGlyphs"  stroke="#000" stroke-width="0.25">Jigsaw KNX 1.10.200</text>
<text x="272.60" y="275.79" font-size="10" font-weight="bold" fill="#000" textLength="32.40" lengthAdjust="spacingAndGlyphs"  stroke="#000" stroke-width="0.25">System</text>
<text x="272.60" y="288.71" font-size="10" fill="#000" textLength="27.90" lengthAdjust="spacingAndGlyphs"  stroke="#000" stroke-width="0.25">Reboot</text>
<text x="433.00" y="288.71" font-size="10" font-weight="bold" fill="#000" textLength="41.00" lengthAdjust="spacingAndGlyphs"  stroke="#000" stroke-width="0.25">Reboot-&gt;</text>
<text x="272.60" y="301.62" font-size="10" fill="#000" textLength="37.90" lengthAdjust="spacingAndGlyphs"  stroke="#000" stroke-width="0.25">Shutdown</text>
<text x="433.00" y="301.62" font-size="10" font-weight="bold" fill="#000" textLength="53.00" lengthAdjust="spacingAndGlyphs"  stroke="#000" stroke-width="0.25">Shutdown-&gt;</text>
<text x="256.30" y="388.86" font-size="10" font-weight="bold" fill="#000" textLength="34.20" lengthAdjust="spacingAndGlyphs"  stroke="#000" stroke-width="0.25">License</text>
<text x="256.30" y="401.06" font-size="10" fill="#000" textLength="80.00" lengthAdjust="spacingAndGlyphs"  stroke="#000" stroke-width="0.25">License information.</text>
<text x="21.00" y="446.27" font-size="10.6" fill="#000" textLength="23.80" lengthAdjust="spacingAndGlyphs"  stroke="#000" stroke-width="0.25">Errors</text>
<text x="68.75" y="446.27" font-size="10.6" fill="#000" textLength="27.00" lengthAdjust="spacingAndGlyphs"  stroke="#000" stroke-width="0.25">Admin</text>
<text transform="translate(100.60,446.27) scale(0.9,1)" text-anchor="middle" font-size="10.6" fill="#000" stroke="#000" stroke-width="0.25">:</text>
<text x="105.00" y="446.27" font-size="10.6" fill="#000" textLength="63.00" lengthAdjust="spacingAndGlyphs"  stroke="#000" stroke-width="0.25">7/August/2019</text>
<text x="171.25" y="446.27" font-size="10.6" fill="#000" textLength="31.75" lengthAdjust="spacingAndGlyphs"  stroke="#000" stroke-width="0.25">17:16:56</text>
<text transform="translate(206.80,446.27) scale(0.9,1)" text-anchor="middle" font-size="10.6" fill="#000" stroke="#000" stroke-width="0.25">:</text>
<text x="211.25" y="446.27" font-size="10.6" fill="#000" textLength="36.75" lengthAdjust="spacingAndGlyphs"  stroke="#000" stroke-width="0.25">Flavinho</text>
<text transform="translate(251.80,446.27) scale(0.9,1)" text-anchor="middle" font-size="10.6" fill="#000" stroke="#000" stroke-width="0.25">:</text>
<text x="255.00" y="446.27" font-size="10.6" fill="#000" textLength="40.50" lengthAdjust="spacingAndGlyphs"  stroke="#000" stroke-width="0.25">SetSetting</text>
<text transform="translate(300.00,446.27) scale(0.9,1)" text-anchor="middle" font-size="10.6" fill="#000" stroke="#000" stroke-width="0.25">:</text>
<text x="303.75" y="446.27" font-size="10.6" fill="#000" textLength="21.75" lengthAdjust="spacingAndGlyphs"  stroke="#000" stroke-width="0.25">Path:</text>
<text x="329.50" y="446.27" font-size="10.6" fill="#000" textLength="36.00" lengthAdjust="spacingAndGlyphs"  stroke="#000" stroke-width="0.25">Building,</text>
<text x="370.00" y="446.27" font-size="10.6" fill="#000" textLength="30.50" lengthAdjust="spacingAndGlyphs"  stroke="#000" stroke-width="0.25">Setting:</text>
<text x="404.50" y="446.27" font-size="10.6" fill="#000" textLength="36.00" lengthAdjust="spacingAndGlyphs"  stroke="#000" stroke-width="0.25">Network,</text>
<text x="445.00" y="446.27" font-size="10.6" fill="#000" textLength="20.50" lengthAdjust="spacingAndGlyphs"  stroke="#000" stroke-width="0.25">Data:</text>
<text x="470.00" y="446.27" font-size="10.6" fill="#000" textLength="21.25" lengthAdjust="spacingAndGlyphs"  stroke="#000" stroke-width="0.25">Open</text>
<text x="496.25" y="446.27" font-size="10.6" fill="#000" textLength="7.50" lengthAdjust="spacingAndGlyphs"  stroke="#000" stroke-width="0.25">-&gt;</text>
</g>
</svg>
</body></html>
